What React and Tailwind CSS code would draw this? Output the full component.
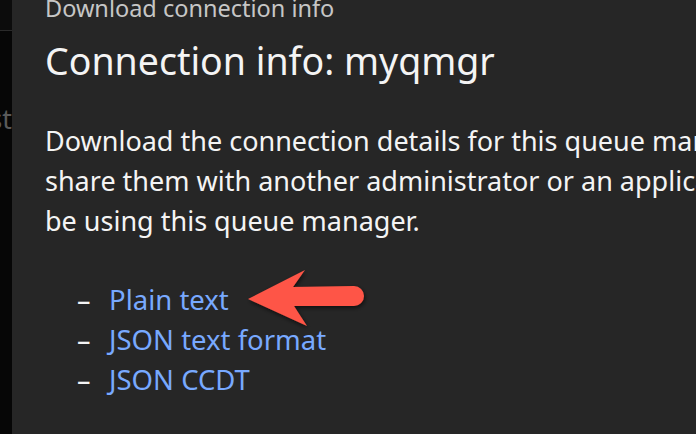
export default function App() {
  const font = { fontFamily: '"Noto Sans", "Open Sans", sans-serif' };
  return (
    <div className="flex h-[434px] w-[696px] overflow-hidden bg-[#262626]" style={font}>
      <div className="flex w-[12px] shrink-0 flex-col overflow-hidden bg-[#060606]">
        <div className="h-[31px] shrink-0 border-b border-[#2a2a2a] bg-[#0c0c0c]" />
        <div className="mt-[73px] flex justify-end whitespace-nowrap text-[26.7px] leading-[30px] text-[#5a5a5a]">
          st
        </div>
      </div>
      <div className="flex min-w-0 flex-1 flex-col pl-[33px]">
        <div className="mt-[-6px] h-[28px] whitespace-nowrap text-[23.5px] leading-[28px] text-[#c6c6c6]">
          Download connection info
        </div>
        <div className="mt-[17px] h-[44px] whitespace-nowrap text-[37.5px] leading-[44px] text-[#f4f4f4]">
          Connection info: myqmgr
        </div>
        <p className="mt-[38px] whitespace-nowrap text-[27px] leading-[40px] text-[#f4f4f4]">
          Download the connection details for this queue manager to
          <br />
          share them with another administrator or an application developer who will
          <br />
          be using this queue manager.
        </p>
        <ul className="mt-[39px] flex flex-col text-[27px] leading-[40px]">
          {['Plain text', 'JSON text format', 'JSON CCDT'].map((t) => (
            <li key={t} className="flex items-center whitespace-nowrap">
              <span className="ml-[32px] w-[32px] text-[#f4f4f4]">–</span>
              <a className="text-[27.5px] text-[#78a9ff]" href="#">{t}</a>
            </li>
          ))}
        </ul>
      </div>
      <svg className="pointer-events-none absolute left-0 top-0" width="696" height="434" viewBox="0 0 696 434">
        <defs>
          <filter id="sh" x="-20%" y="-20%" width="140%" height="140%">
            <feDropShadow dx="1" dy="2" stdDeviation="2" floodColor="#000" floodOpacity="0.6" />
          </filter>
        </defs>
        <path
          d="M248 299 L305 270 L293 287 L354 286 A10 10 0 0 1 354 306 L294 306 L307 326 Z"
          fill="#fe5546"
          filter="url(#sh)"
        />
      </svg>
    </div>
  );
}
